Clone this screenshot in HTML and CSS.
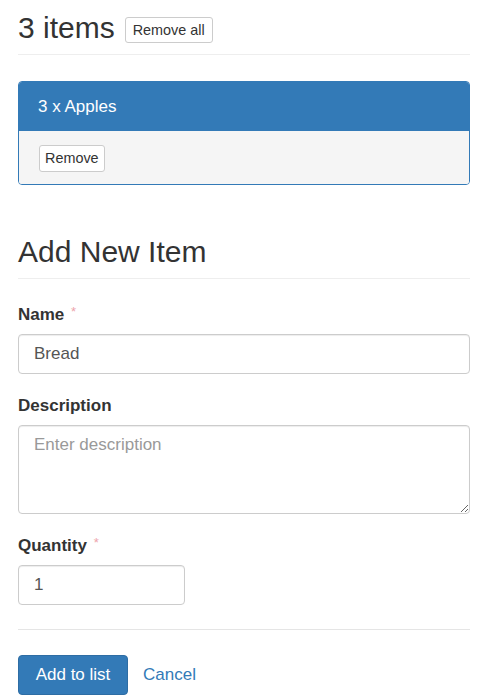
FILE: index.html
```html
<!DOCTYPE html>
<html lang="en">
<head>
<meta charset="utf-8">
<title>Shopping list</title>
<link rel="stylesheet" href="styles.css">
</head>
<body>
<div class="page">
  <div class="list-header">
    <h2 class="title">3 items</h2>
    <button class="btn btn-sm" type="button">Remove all</button>
  </div>

  <div class="panel">
    <div class="panel-heading">3 x Apples</div>
    <div class="panel-body">
      <button class="btn btn-xs" type="button">Remove</button>
    </div>
  </div>

  <h3 class="section-title">Add New Item</h3>

  <form class="form">
    <div class="form-group">
      <label class="label" for="name">Name <span class="req">*</span></label>
      <input class="control" id="name" type="text" value="Bread">
    </div>
    <div class="form-group">
      <label class="label" for="desc">Description</label>
      <textarea class="control textarea" id="desc" placeholder="Enter description"></textarea>
    </div>
    <div class="form-group">
      <label class="label" for="qty">Quantity <span class="req">*</span></label>
      <input class="control qty" id="qty" type="text" value="1">
    </div>
    <div class="actions">
      <button class="btn-primary" type="button">Add to list</button>
      <a class="link" href="#">Cancel</a>
    </div>
  </form>
</div>
</body>
</html>
```

FILE: styles.css
```css
* { box-sizing: border-box; }

html, body {
  margin: 0;
  padding: 0;
  background: #fff;
}

body {
  font-family: "Liberation Sans", Arial, Helvetica, sans-serif;
  font-size: 17px;
  line-height: 24px;
  color: #333;
}

.page {
  padding: 0 15px 0 18px;
}

.list-header {
  display: flex;
  align-items: flex-start;
  gap: 10px;
  margin-top: 11px;
  padding-bottom: 10px;
  border-bottom: 1px solid #eee;
}

.title {
  margin: 0;
  font-size: 30px;
  line-height: 33px;
  font-weight: normal;
}

.btn {
  font-family: inherit;
  background: #fff;
  color: #333;
  border: 1px solid #ccc;
  border-radius: 3px;
  cursor: pointer;
}

.btn-sm {
  margin-top: 6px;
  height: 26px;
  padding: 0 7px;
  font-size: 14.4px;
  line-height: 24px;
}

.btn-xs {
  height: 27px;
  padding: 0 5px;
  font-size: 14.4px;
  line-height: 25px;
}

.panel {
  margin-top: 26px;
  border: 1px solid #337ab7;
  border-radius: 4px;
  overflow: hidden;
}

.panel-heading {
  background: #337ab7;
  color: #fff;
  height: 49px;
  padding: 1px 19px 0;
  display: flex;
  align-items: center;
  font-size: 17px;
}

.panel-body {
  background: #f5f5f5;
  padding: 14px 20px 12px;
  display: flex;
}

.section-title {
  margin: 50px 0 0;
  font-size: 30px;
  line-height: 33px;
  font-weight: normal;
  padding-bottom: 10px;
  border-bottom: 1px solid #eee;
}

.form {
  padding-top: 24px;
}

.form-group {
  margin-bottom: 20px;
  display: flex;
  flex-direction: column;
  align-items: flex-start;
}

.label {
  font-weight: bold;
  font-size: 17px;
  line-height: 24px;
  margin-bottom: 7px;
}

.req {
  color: #eda3ab;
  font-weight: normal;
  font-size: 13px;
  vertical-align: top;
  line-height: 18px;
  margin-left: 2px;
}

.control {
  width: 100%;
  height: 40px;
  padding: 0 15px;
  font-family: inherit;
  font-size: 17px;
  color: #555;
  background: #fff;
  border: 1px solid #ccc;
  border-radius: 4px;
  box-shadow: inset 0 1px 1px rgba(0, 0, 0, 0.075);
  outline: none;
}

.textarea {
  height: 89px;
  padding: 7px 15px;
  line-height: 24px;
  resize: vertical;
  display: block;
}

.textarea::placeholder {
  color: #999;
}

.qty {
  width: 167px;
}

.actions {
  margin-top: 24px;
  padding-top: 25px;
  border-top: 1px solid #e5e5e5;
  display: flex;
  align-items: center;
  gap: 15px;
}

.btn-primary {
  height: 40px;
  width: 110px;
  padding: 0;
  font-family: inherit;
  font-size: 17px;
  color: #fff;
  background: #337ab7;
  border: 1px solid #2e6da4;
  border-radius: 4px;
  cursor: pointer;
}

.link {
  color: #337ab7;
  text-decoration: none;
  font-size: 17px;
}
```
